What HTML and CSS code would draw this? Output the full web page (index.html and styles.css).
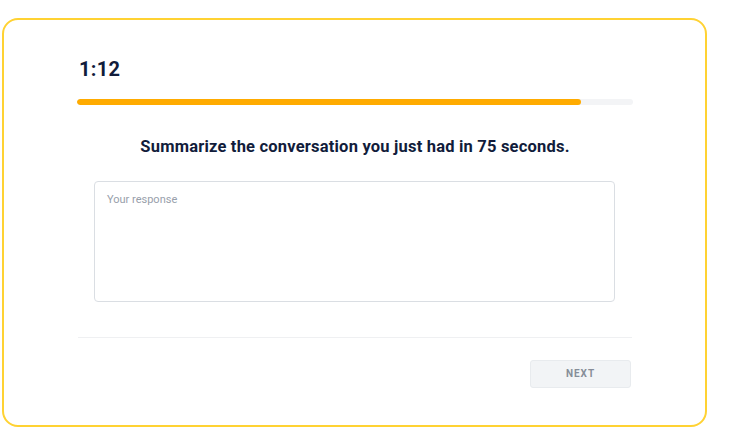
FILE: index.html
```html
<!DOCTYPE html>
<html lang="en">
<head>
<meta charset="utf-8">
<title>Summarize</title>
<link rel="stylesheet" href="styles.css">
</head>
<body>
<main class="card">
  <div class="timer">1:12</div>
  <div class="progress"><div class="progress-fill" style="width: 90.6%"></div></div>
  <h1 class="prompt">Summarize the conversation you just had in 75 seconds.</h1>
  <div class="response-wrap">
    <textarea class="response" placeholder="Your response"></textarea>
  </div>
  <hr class="divider">
  <div class="actions">
    <button class="next-btn" type="button">NEXT</button>
  </div>
</main>
</body>
</html>
```
FILE: styles.css
```css
* { box-sizing: border-box; }
html, body { margin: 0; padding: 0; background: #ffffff; }
body {
  font-family: Roboto, "Liberation Sans", Arial, sans-serif;
  color: #111c3b;
  padding: 18px 22px 0 2px;
}
.card {
  width: 705px;
  height: 409px;
  border: 2px solid #ffd233;
  border-radius: 16px;
  padding: 36.5px 72px 0 73px;
  display: flex;
  flex-direction: column;
}
.timer {
  font-size: 20px;
  line-height: 24px;
  font-weight: 700;
  padding-left: 2px;
  letter-spacing: 0.3px;
}
.progress {
  margin-top: 18px;
  height: 6px;
  border-radius: 3px;
  background: #f3f4f6;
  overflow: hidden;
}
.progress-fill {
  height: 100%;
  background: #ffab00;
  border-radius: 3px;
}
.prompt {
  margin: 32px 0 0;
  font-size: 16.5px;
  line-height: 20px;
  font-weight: 700;
  text-align: center;
  letter-spacing: 0.2px;
}
.response-wrap {
  margin-top: 24px;
  display: flex;
  padding-left: 17px;
}
.response {
  width: 521px;
  height: 121px;
  border: 1px solid #dadee3;
  border-radius: 4px;
  padding: 11px 12px;
  font-family: inherit;
  font-size: 11px;
  color: #111c3b;
  resize: none;
  outline: none;
}
.response::placeholder { color: #98a0ab; }
.divider {
  margin: 35px 1px 0;
  border: 0;
  border-top: 1px solid #eff0f2;
  height: 0;
}
.actions {
  margin-top: 22px;
  display: flex;
  justify-content: flex-end;
  padding-right: 2px;
}
.next-btn {
  width: 101px;
  height: 28px;
  border: 1px solid #e8ebee;
  border-radius: 3px;
  background: #f2f4f6;
  color: #868d98;
  font-family: inherit;
  font-size: 10px;
  font-weight: 700;
  letter-spacing: 1px;
  padding: 0;
}
```
